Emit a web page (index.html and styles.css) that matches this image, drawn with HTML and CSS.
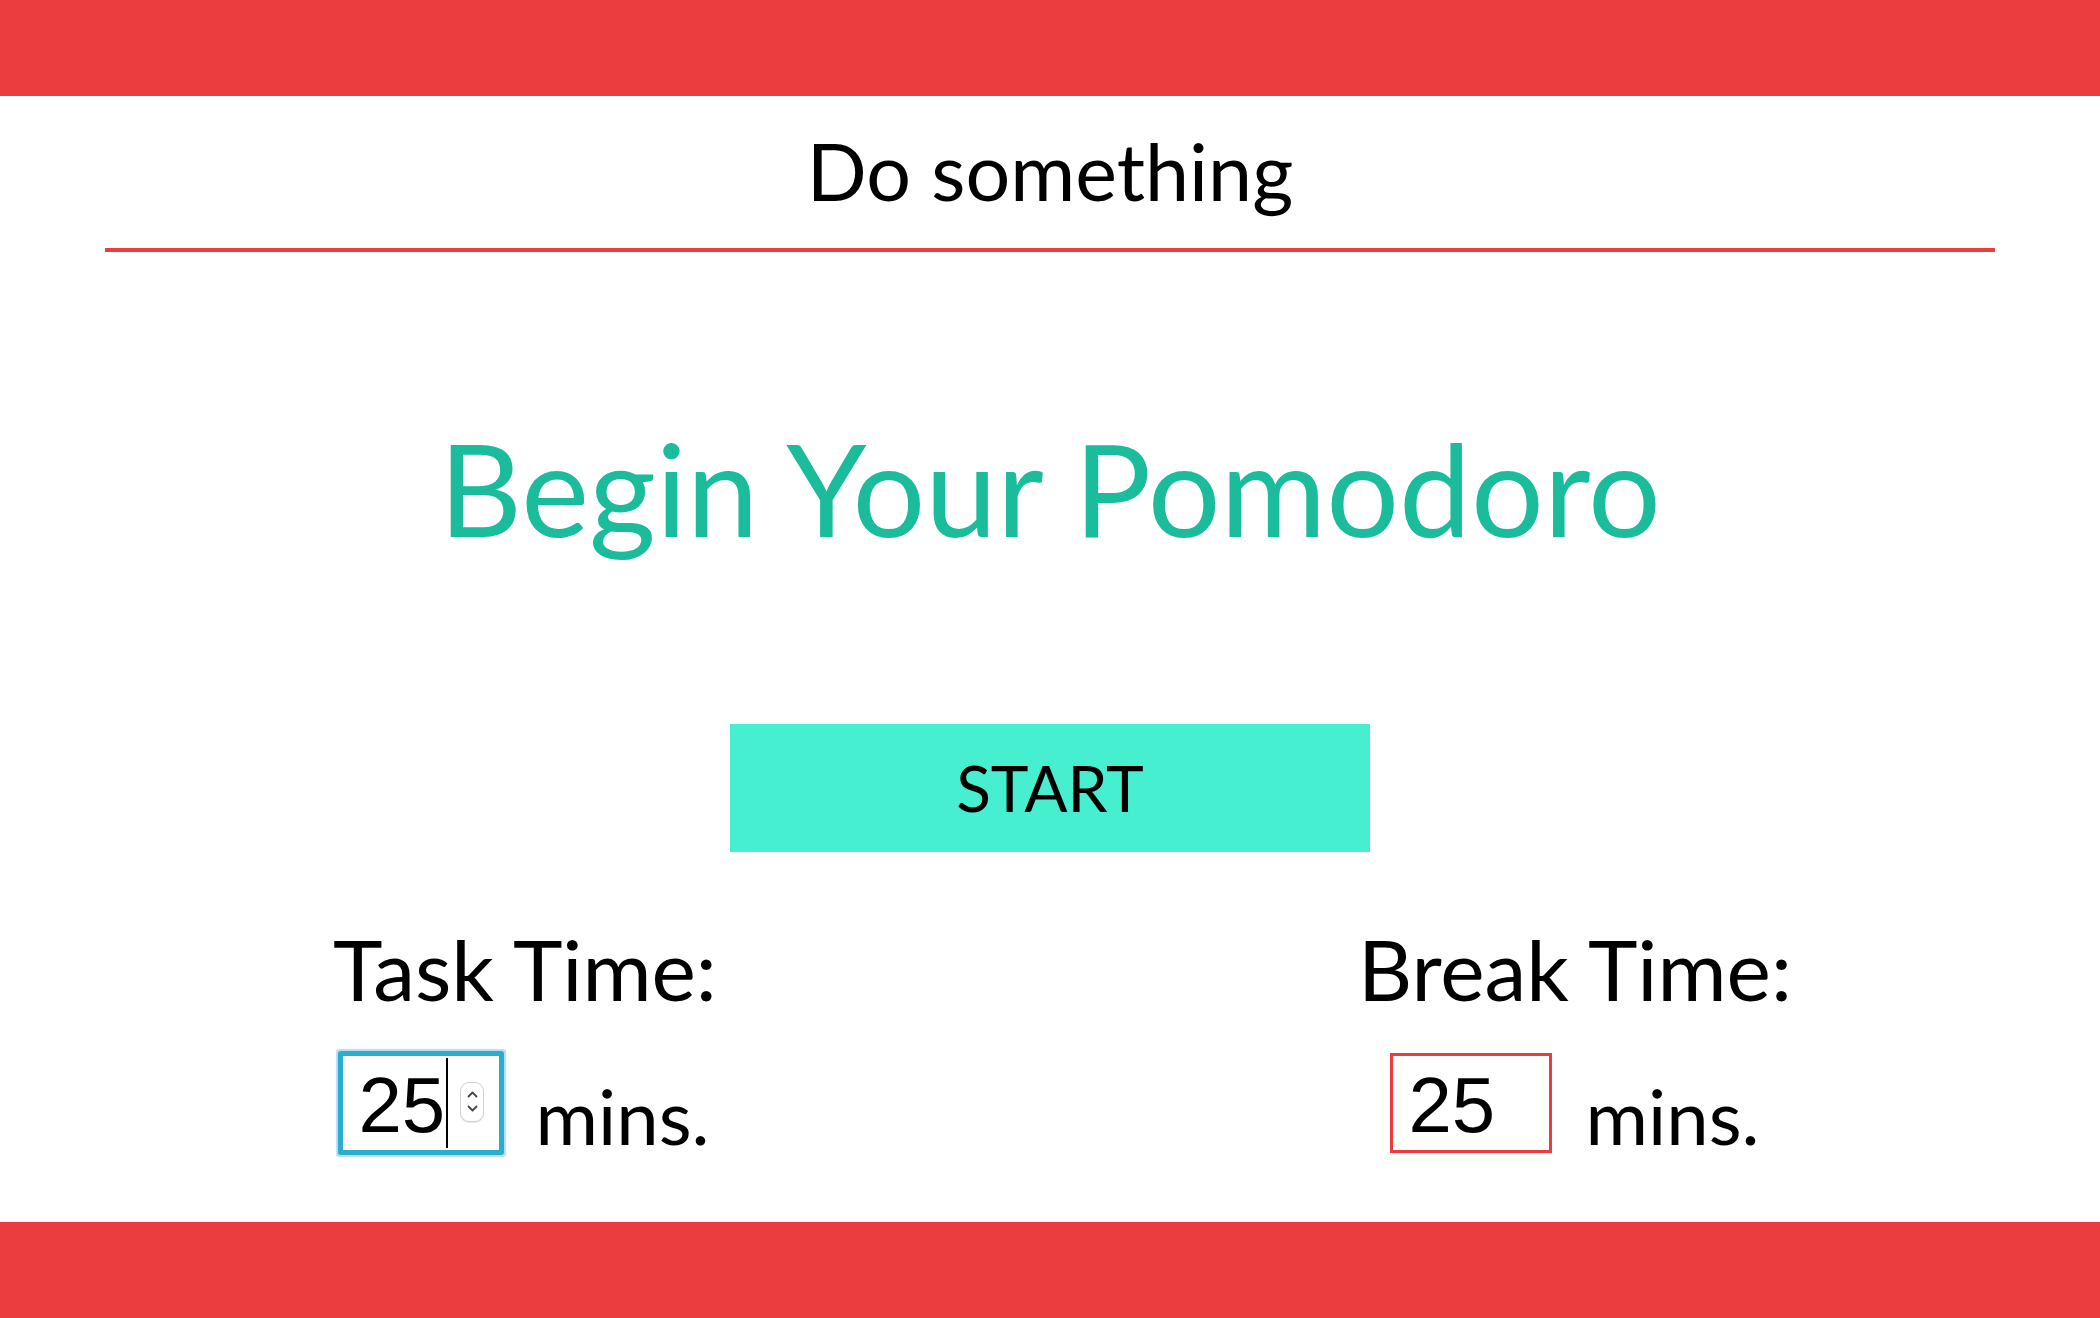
FILE: index.html
```html
<!DOCTYPE html>
<html lang="en">
<head>
<meta charset="utf-8">
<title>Pomodoro</title>
<link rel="stylesheet" href="styles.css">
</head>
<body>
<div class="page">
  <header class="bar"></header>
  <main class="main">
    <h2 class="title">Do something</h2>
    <hr class="divider">
    <h1 class="heading">Begin Your Pomodoro</h1>
    <button class="start" type="button">START</button>
    <div class="timers">
      <div class="timer">
        <div class="label">Task Time:</div>
        <div class="row">
          <div class="field focused">
            <span class="val">25</span><span class="caret"></span>
            <span class="spin">
              <svg width="13" height="29" viewBox="0 0 13 29">
                <path d="M2.5 9.5 L6.5 5.5 L10.5 9.5" fill="none" stroke="#444" stroke-width="1.8" stroke-linecap="round" stroke-linejoin="round"/>
                <path d="M2.5 19.5 L6.5 23.5 L10.5 19.5" fill="none" stroke="#444" stroke-width="1.8" stroke-linecap="round" stroke-linejoin="round"/>
              </svg>
            </span>
          </div>
          <span class="unit">mins.</span>
        </div>
      </div>
      <div class="timer">
        <div class="label">Break Time:</div>
        <div class="row">
          <div class="field"><span class="val">25</span></div>
          <span class="unit">mins.</span>
        </div>
      </div>
    </div>
  </main>
  <footer class="bar"></footer>
</div>
</body>
</html>
```
FILE: styles.css
```css
html, body {
  margin: 0;
  padding: 0;
  background: #ffffff;
}

body {
  font-family: Lato, "Open Sans", "Liberation Sans", sans-serif;
  color: #000;
}

.page {
  display: flex;
  flex-direction: column;
  min-height: 100vh;
}

.bar {
  flex-shrink: 0;
  height: 96px;
  background: #eb3c40;
}

.main {
  flex: 1;
}

.title {
  margin: 27px 0 29px;
  font-size: 79px;
  line-height: 96px;
  font-weight: 400;
  text-align: center;
}

.divider {
  display: block;
  width: 90%;
  height: 4px;
  margin: 0 auto;
  border: 0;
  background: #eb3c40;
}

.heading {
  margin: 157px 0 0;
  font-size: 128.5px;
  line-height: 156px;
  font-weight: 400;
  color: #1abc9c;
  text-align: center;
}

.start {
  display: block;
  width: 640px;
  height: 128px;
  margin: 159px auto 0;
  padding: 0;
  border: 0;
  background: #46efcf;
  color: #000;
  font-family: Lato, "Open Sans", "Liberation Sans", sans-serif;
  font-size: 64px;
  line-height: 1.2;
}

.timers {
  display: grid;
  grid-template-columns: 1fr 1fr;
  margin-top: 67px;
}

.timer {
  text-align: center;
}

.label {
  font-size: 84px;
  line-height: 1.2;
}

.row {
  display: flex;
  justify-content: center;
  align-items: flex-start;
  gap: 33px;
  margin-top: 33px;
}

.field {
  box-sizing: border-box;
  width: 162px;
  height: 100px;
  border: 3px solid #eb3c40;
  padding: 10px 0 0 15px;
  display: flex;
  align-items: flex-start;
  overflow: hidden;
  background: #fff;
  font-family: "Liberation Sans", Arial, sans-serif;
  font-size: 78px;
  line-height: 78px;
  text-align: left;
}

.field.focused {
  border-color: #2aaecb;
  box-shadow: 0 0 0 2px #2aaecb, 0 0 1px 4px rgba(150, 198, 248, 0.65);
  border-radius: 1px;
  overflow: visible;
}

.caret {
  width: 2px;
  height: 90px;
  margin: -8px 0 0 1px;
  background: #000;
  flex-shrink: 0;
}

.spin {
  box-sizing: border-box;
  width: 24px;
  height: 40px;
  margin: 16px 0 0 12px;
  border: 1px solid #d2d2d2;
  border-radius: 9px;
  background: #fff;
  box-shadow: 0 1px 1px rgba(0, 0, 0, 0.08);
  display: flex;
  align-items: center;
  justify-content: center;
  flex-shrink: 0;
}

.spin svg {
  display: block;
}

.unit {
  margin-top: 17px;
  font-size: 76px;
  line-height: 1.2;
}
```
